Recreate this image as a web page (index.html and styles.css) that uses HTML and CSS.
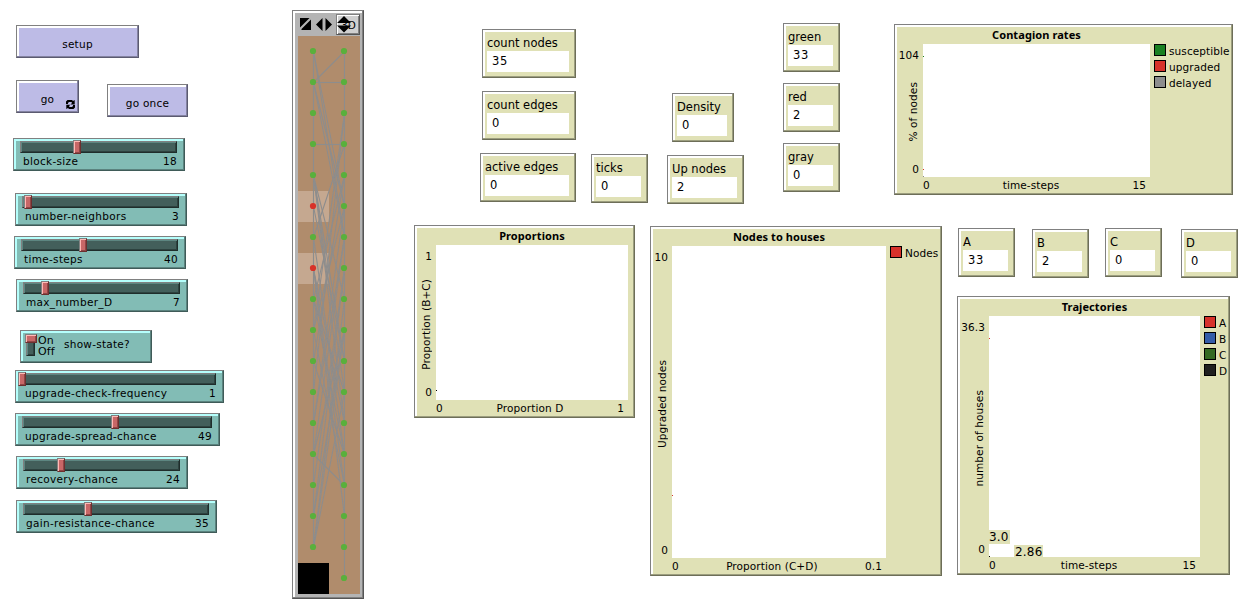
FILE: index.html
```html
<!DOCTYPE html>
<html lang="en">
<head>
<meta charset="utf-8">
<title>Contagion model</title>
<link rel="stylesheet" href="styles.css">
</head>
<body>
<main class="interface">
  <section class="controls">
    <button class="bevel btn btn-setup">setup</button>
    <div class="btn-row">
      <button class="bevel btn btn-go"><span>go</span>
        <svg class="forever" width="9" height="9" viewBox="0 0 9 9"><path d="M0 4V1.500L1.500 0H6L7 1L8.700 0V4.500H4.500L6 3L5.500 2H3L2 3V4ZM9 5V7.500L7.500 9H3L2 8L0.300 9V4.700H4.500L3 6L3.500 7H6L7 6V5Z"/></svg>
      </button>
      <button class="bevel btn btn-once">go once</button>
    </div>
    <div class="bevel slider block-size"><div class="track"><i class="knob"></i></div><div class="caption"><span>block-size</span><span>18</span></div></div>
    <div class="bevel slider neighbors"><div class="track"><i class="knob"></i></div><div class="caption"><span>number-neighbors</span><span>3</span></div></div>
    <div class="bevel slider time-steps"><div class="track"><i class="knob"></i></div><div class="caption"><span>time-steps</span><span>40</span></div></div>
    <div class="bevel slider max-d"><div class="track"><i class="knob"></i></div><div class="caption"><span>max_number_D</span><span>7</span></div></div>
    <div class="bevel switch"><div class="switch-track"><i class="switch-knob"></i></div><div class="states"><span>On</span><span>Off</span></div><span class="switch-name">show-state?</span></div>
    <div class="bevel slider check"><div class="track"><i class="knob"></i></div><div class="caption"><span>upgrade-check-frequency</span><span>1</span></div></div>
    <div class="bevel slider spread"><div class="track"><i class="knob"></i></div><div class="caption"><span>upgrade-spread-chance</span><span>49</span></div></div>
    <div class="bevel slider recovery"><div class="track"><i class="knob"></i></div><div class="caption"><span>recovery-chance</span><span>24</span></div></div>
    <div class="bevel slider gain"><div class="track"><i class="knob"></i></div><div class="caption"><span>gain-resistance-chance</span><span>35</span></div></div>
  </section>

  <section class="bevel world">
    <div class="world-bar">
      <svg class="world-icons" width="33" height="14" viewBox="0 0 33 14"><path d="M0 1H9.500L0 10.500ZM11 2.500V13H1.500V12ZM16 7.500L22.500 1V14ZM32 7.500L25.500 1V14Z"/></svg>
      <div class="view3d">3D<svg class="view3d-arrows" width="14" height="17" viewBox="0 0 14 17"><path d="M0 7L7 0L14 7ZM0 9.500H14L7 16.500Z"/></svg></div>
    </div>
    <svg class="patches" width="62" height="558" viewBox="0 0 62 558">
      <rect class="ground" width="62" height="558"/>
      <path class="lit" d="M0 155H31V186H0ZM0 217H31V248H0Z"/>
      <rect y="527" width="31" height="31"/>
      <g id="links" class="links"></g>
      <g id="nodes"></g>
    </svg>
  </section>

  <section class="output">
    <div class="upper">
      <div class="stack counts">
        <div class="bevel monitor"><label>count nodes</label><output>35</output></div>
        <div class="bevel monitor"><label>count edges</label><output>0</output></div>
        <div class="bevel monitor active"><label>active edges</label><output>0</output></div>
      </div>
      <div class="bevel monitor ticks"><label>ticks</label><output>0</output></div>
      <div class="stack densities">
        <div class="bevel monitor density"><label>Density</label><output>0</output></div>
        <div class="bevel monitor up"><label>Up nodes</label><output>2</output></div>
      </div>
      <div class="stack colors">
        <div class="bevel monitor"><label>green</label><output>33</output></div>
        <div class="bevel monitor"><label>red</label><output>2</output></div>
        <div class="bevel monitor"><label>gray</label><output>0</output></div>
      </div>
      <div class="bevel plot contagion">
        <h2>Contagion rates</h2>
        <div class="y-axis"><span>104</span><span class="y-name"><b>% of nodes</b></span><span>0</span></div>
        <div class="area"><svg class="pens" width="2" height="133"><path fill="#198022" d="M0 12h1v1H0z"/><path fill="#d7322b" d="M0 125h1v1H0z"/><path fill="#8d8d8d" d="M0 132h1v1H0z"/></svg></div>
        <ul class="legend"><li><i class="sw-green"></i>susceptible</li><li><i class="sw-red"></i>upgraded</li><li><i class="sw-gray"></i>delayed</li></ul>
        <div class="x-axis"><span>0</span><span>time-steps</span><span>15</span></div>
      </div>
    </div>
    <div class="lower">
      <div class="bevel plot proportions">
        <h2>Proportions</h2>
        <div class="y-axis"><span>1</span><span class="y-name"><b>Proportion (B+C)</b></span><span>0</span></div>
        <div class="area"><svg class="pens" width="2" height="155"><path d="M0 145h1v1H0z"/></svg></div>
        <div class="x-axis"><span>0</span><span>Proportion D</span><span>1</span></div>
      </div>
      <div class="bevel plot houses">
        <h2>Nodes to houses</h2>
        <div class="y-axis"><span>10</span><span class="y-name"><b>Upgraded nodes</b></span><span>0</span></div>
        <div class="area"><svg class="pens" width="2" height="312"><path fill="#d7322b" d="M0 249h1v1H0z"/></svg></div>
        <ul class="legend"><li><i class="sw-red"></i>Nodes</li></ul>
        <div class="x-axis"><span>0</span><span>Proportion (C+D)</span><span>0.1</span></div>
      </div>
      <div class="right">
        <div class="states-row">
          <div class="bevel monitor m-a"><label>A</label><output>33</output></div>
          <div class="bevel monitor m-b"><label>B</label><output>2</output></div>
          <div class="bevel monitor m-c"><label>C</label><output>0</output></div>
          <div class="bevel monitor m-d"><label>D</label><output>0</output></div>
        </div>
        <div class="bevel plot trajectories">
          <h2>Trajectories</h2>
          <div class="y-axis"><span>36.3</span><span class="y-name"><b>number of houses</b></span><span>0</span></div>
          <div class="area"><svg class="pens" width="2" height="241"><path fill="#d7322b" d="M0 22h1v1H0z"/><path d="M0 240h1v1H0z"/></svg><span class="readout readout-y">3.0</span><span class="readout readout-x">2.86</span></div>
          <ul class="legend"><li><i class="sw-red"></i>A</li><li><i class="sw-blue"></i>B</li><li><i class="sw-forest"></i>C</li><li><i class="sw-black"></i>D</li></ul>
          <div class="x-axis"><span>0</span><span>time-steps</span><span>15</span></div>
        </div>
      </div>
    </div>
  </section>
</main>
<script src="world.js"></script>
</body>
</html>
```

FILE: world.js
```js
// Two streets of houses, 31px apart; the last patch on the left is empty.
const NS = "http://www.w3.org/2000/svg";
const LEFT = 15.5, RIGHT = 46.5;
const y = i => 15.5 + 31 * i;
// [left house, right house]
const pairs = [
  [0,5],[0,6],[1,0],[1,1],[1,6],[1,5],[3,3],[11,2],[6,3],[9,2],
  [4,10],[4,12],[4,8],[4,11],[8,4],[9,5],[12,6],[13,6],[7,12],[7,14],
  [5,10],[6,13],[8,13],[8,11],[7,15],[9,14],[15,7],[14,7],[16,8],[16,9],
  [15,9],[13,9],[16,11],[12,5],[10,13],[13,14],[10,4]
];
function add(parent, name, attrs) {
  const el = document.createElementNS(NS, name);
  for (const k in attrs) el.setAttribute(k, attrs[k]);
  document.getElementById(parent).appendChild(el);
}
add("links", "path", { d: `M${LEFT} ${y(0)}V${y(16)}M${RIGHT} ${y(0)}V${y(17)}` });
for (const [l, r] of pairs) add("links", "path", { d: `M${LEFT} ${y(l)}L${RIGHT} ${y(r)}` });
for (let i = 0; i < 18; i++) {
  const cy = y(i) - 0.5;
  if (i < 17) add("nodes", "circle", { cx: 15, cy, r: 3.1, fill: i === 5 || i === 7 ? "#d73229" : "#59b03c" });
  add("nodes", "circle", { cx: 46, cy, r: 3.1, fill: "#59b03c" });
}
```

FILE: styles.css
```css
* { box-sizing: border-box; margin: 0; padding: 0; }
body { background: #fff; color: #000; font: 10.5px/14px "DejaVu Sans", sans-serif; letter-spacing: 0.1px; width: 1247px; height: 608px; overflow: hidden; }
i, b { font-style: normal; font-weight: normal; }
ul { list-style: none; }

.interface { display: flex; height: 608px; }

.bevel {
  border: 1px solid; border-color: #808080 var(--dark) var(--dark) #808080;
  box-shadow: inset -1px -1px var(--mid), inset 2px 2px var(--light);
  background: var(--face); color: #000;
}

/* Controls */
.controls { width: 292px; display: flex; flex-direction: column; align-items: flex-start; padding-top: 25px; }
.btn { --face: #bdbbe6; --light: #fff; --mid: #8483a1; --dark: #5b5a70; font: inherit; letter-spacing: 0.25px; height: 33px; display: flex; align-items: center; justify-content: center; padding-top: 5px; }
.btn-setup { width: 123px; margin-left: 16px; }
.btn-row { display: flex; align-items: flex-start; margin: 22px 0 0 16px; }
.btn-go { width: 63px; position: relative; }
.forever { position: absolute; right: 3px; bottom: 3px; }
.btn-once { width: 81px; margin: 4px 0 0 28px; }

.slider, .switch { --face: #82bcb5; --light: #b5fffc; --mid: #5b837f; --dark: #3f5b58; height: 33px; }
.slider { width: 172px; padding: 2px 7px 0 6px; flex: none; }
.track {
  height: 12px; background: #435f5b; padding-left: var(--at); border: 1px solid; border-color: #808080 #1f2d2b #1f2d2b #808080;
  box-shadow: inset 1px 1px #5d8681, inset -1px -1px #2d423f;
}
.knob { display: block; width: 8px; height: 14px; margin: -2px 0 0 -1px; background: #c86767; border: 1px solid; border-color: #808080 #6d2f2f #6d2f2f #808080; box-shadow: inset 1px 1px #ffb9b5, inset -1px -1px #8f4646; }
.caption { display: flex; justify-content: space-between; padding: 1px 0 0 3px; letter-spacing: 0.32px; }
.block-size { margin: 21px 0 0 13px; --at: 53px; }
.neighbors { margin: 22px 0 0 15px; --at: 2px; }
.time-steps { margin: 10px 0 0 14px; --at: 58px; }
.max-d { margin: 10px 0 0 16px; --at: 18px; }
.check { margin: 7px 0 0 15px; width: 209px; --at: 0px; }
.check .knob { margin-left: -5px; }
.spread { margin: 10px 0 0 15px; width: 205px; --at: 89px; }
.recovery { margin: 10px 0 0 16px; --at: 34px; }
.gain { margin: 11px 0 0 16px; width: 201px; --at: 61px; }
.switch { width: 132px; margin: 18px 0 0 20px; display: flex; padding: 3px 0 0 4px; flex: none; }
.switch-track { width: 9px; height: 22px; margin-left: 1px; background: #435f5b; border: 1px solid; border-color: #808080 #1f2d2b #1f2d2b #808080; box-shadow: inset 1px 1px #5d8681, inset -1px -1px #2d423f; }
.switch-knob { display: block; width: 12px; height: 9px; margin: -1px 0 0 -2px; background: #c86767; border: 1px solid; border-color: #808080 #6d2f2f #6d2f2f #808080; box-shadow: inset 1px 1px #ffb9b5, inset -1px -1px #8f4646; }
.states { display: flex; flex-direction: column; width: 26px; padding: 1px 0 0 3px; line-height: 11px; font-size: 11px; }
.switch-name { margin: 3px 0 0 3px; letter-spacing: 0.25px; }

/* World view */
.world { --face: #b4b4b4; --light: #fff; --mid: #808080; --dark: #555; width: 72px; height: 589px; margin-top: 10px; padding: 3px 3px 4px 5px; flex: none; }
.world-bar { height: 22px; display: flex; }
.world-icons { margin: 3px 0 0 2px; flex: none; }
.view3d { position: relative; width: 24px; height: 21px; margin-left: 3px; background: #d0d0d0; border: 1px solid; border-color: #808080 #555 #555 #808080; box-shadow: inset 1px 1px #fff, inset -1px -1px #808080; line-height: 20px; padding-left: 4px; flex: none; }
.view3d-arrows { position: absolute; left: 0; top: 1px; }
.patches { display: block; }
.ground { fill: #b08c6c; }
.lit { fill: #c5a890; }
.links { stroke: #8d8d8d; stroke-width: 1.1; fill: none; }

/* Monitors */
.monitor { --face: #e0e1b6; --light: #fff; --mid: #9c9e7f; --dark: #6d6e58; width: 94px; height: 49px; padding: 5px 6px 0 4px; font-size: 11.5px; line-height: 16px; letter-spacing: 0; flex: none; }
.monitor label, .monitor output { display: block; white-space: nowrap; }
.monitor output { background: #fff; height: 21px; line-height: 21px; padding-left: 5px; letter-spacing: 0.6px; }
.output { margin-left: 50px; flex: none; }
.upper { display: flex; align-items: flex-start; height: 225px; padding-left: 66px; }
.stack { display: flex; flex-direction: column; align-items: flex-end; }
.counts { padding-top: 29px; gap: 13px; }
.active { width: 96px; }
.ticks { width: 57px; margin: 154px 0 0 15px; }
.densities { margin: 93px 0 0 19px; gap: 13px; align-items: flex-start; }
.density { width: 62px; margin-left: 5px; }
.up { width: 77px; }
.colors { margin: 23px 0 0 39px; gap: 11px; }
.colors .monitor, .states-row .monitor { width: 57px; }
.lower { display: flex; align-items: flex-start; }
.right { margin-left: 15px; }
.states-row { display: flex; align-items: flex-start; height: 71px; }
.m-a { margin: 3px 0 0 1px; }
.m-b { margin: 4px 0 0 17px; }
.m-c { margin: 3px 0 0 16px; }
.m-d { margin: 4px 0 0 19px; }

/* Plots */
.plot { --face: #e0e1b6; --light: #fff; --mid: #9c9e7f; --dark: #6d6e58; display: grid; grid-template-rows: 19px 1fr 17px; flex: none; }
.contagion { width: 339px; height: 171px; margin: 24px 0 0 54px; grid-template-columns: 28px 227px 1fr; }
.proportions { width: 221px; height: 193px; grid-template-columns: 21px 192px 1fr; }
.houses { width: 292px; height: 350px; margin: 1px 0 0 15px; grid-template-columns: 21px 214px 1fr; }
.trajectories { width: 273px; height: 279px; grid-template-columns: 31px 211px 1fr; }
.plot h2 { grid-area: 1 / 2; font: bold 11px/19px "Noto Sans", sans-serif; letter-spacing: 0.08px; text-align: center; white-space: nowrap; }
.y-axis { grid-area: 2 / 1; display: flex; flex-direction: column; align-items: flex-end; padding: 4px 4px 1px 0; min-width: 0; }
.y-name { flex: 1; display: flex; align-items: center; justify-content: center; width: 14px; margin-right: -1px; }
.y-name b { writing-mode: vertical-rl; transform: rotate(180deg); white-space: nowrap; }
.area { grid-area: 2 / 2; background: #fff; position: relative; }
.pens { display: block; }
.x-axis { grid-area: 3 / 2; display: flex; justify-content: space-between; padding: 1px 4px 0 0; }
.legend { grid-area: 2 / 3; padding-left: 4px; }
.legend li { display: flex; height: 16px; line-height: 15px; gap: 3px; white-space: nowrap; }
.legend i { width: 12px; height: 12px; border: 1px solid #000; flex: none; }
.sw-green { background: #198022; }
.sw-red { background: #d7322b; }
.sw-gray { background: #8d8d8d; }
.sw-blue { background: #345da9; }
.sw-forest { background: #346a22; }
.sw-black { background: #1f1f1f; }
.readout { position: absolute; background: #e0e1b6; font-size: 12px; line-height: 14px; height: 14px; letter-spacing: 0.2px; }
.readout-y { left: 0; bottom: 13px; width: 21px; }
.readout-x { left: 25px; bottom: 0; width: 29px; height: 12px; padding-left: 1px; }
```
